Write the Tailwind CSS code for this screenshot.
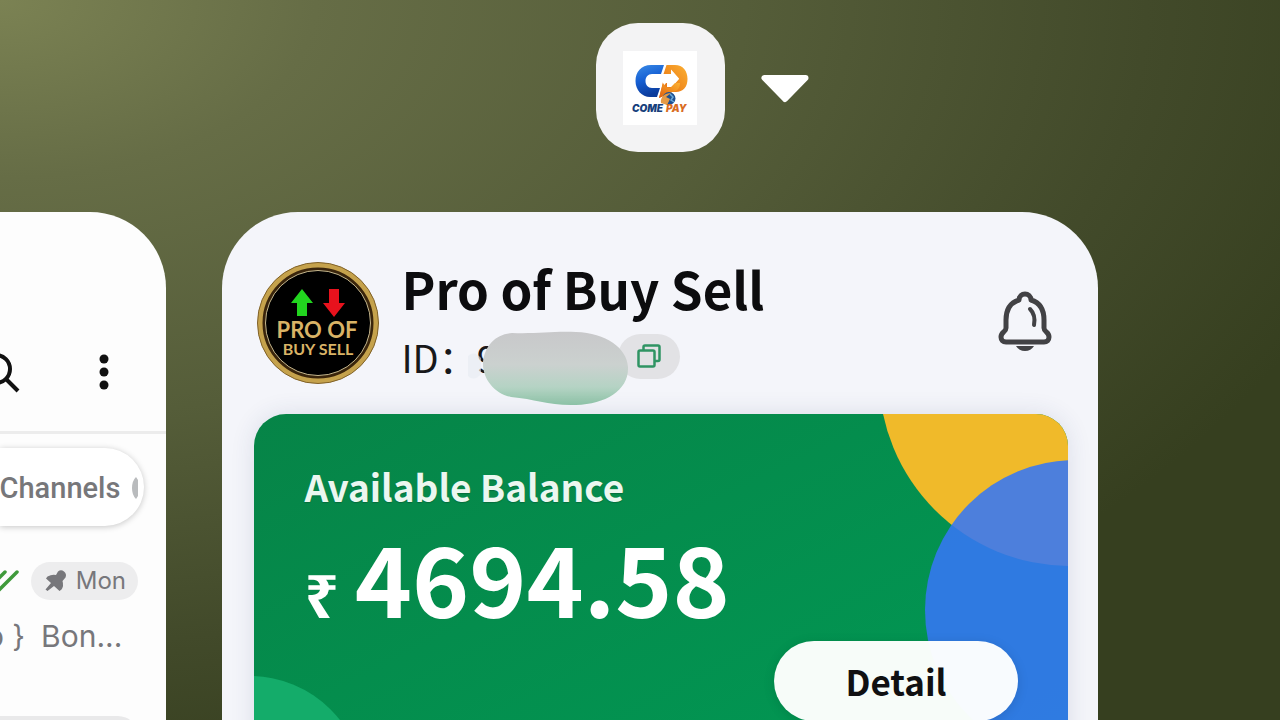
<!DOCTYPE html>
<html lang="en">
<head>
<meta charset="utf-8">
<meta name="viewport" content="width=device-width, initial-scale=1">
<title>Recent apps</title>
<script src="https://cdn.jsdelivr.net/npm/@tailwindcss/browser@4"></script>
</head>
<body class="h-screen overflow-hidden bg-[#363f20] bg-[radial-gradient(ellipse_112%_112%_at_0_0,#7b8253_0%,#666d46_22%,#555d39_52%,#424a2a_80%,#363f1f_100%)] font-['Noto_Sans_CJK_SC','Noto_Sans',sans-serif]">
<div class="flex h-full flex-col">

  <!-- App switcher header -->
  <header class="flex shrink-0 items-center justify-center gap-9 pt-[23px] pl-[124px] pb-[60px]">
    <div class="flex size-[129px] items-center justify-center rounded-[42px] bg-[#f3f3f4]">
      <svg class="size-[74px]" viewBox="0 0 74 74" role="img" aria-label="Come Pay">
        <defs>
          <linearGradient id="blue" x1="0" y1="0" x2="0.3" y2="1"><stop offset="0" stop-color="#3a8be6"/><stop offset="0.5" stop-color="#1660d4"/><stop offset="1" stop-color="#0b3b9c"/></linearGradient>
          <linearGradient id="orange" x1="1" y1="0" x2="0" y2="1"><stop offset="0" stop-color="#fbb033"/><stop offset="0.5" stop-color="#f08a1d"/><stop offset="1" stop-color="#dc5f12"/></linearGradient>
        </defs>
        <rect width="74" height="74" fill="#fff"/>
        <path d="M41 14H28C18 14 12.500 21 12.500 30S19 46 27 46H34L37 37H29C25 37 22.500 34 22.500 30S25 23 29 23H38Z" fill="url(#blue)"/>
        <path d="M43.500 14H52C60 14 64.500 20 64.500 28S60 41 53 41H49L36 47L40 31L44 30V36H49L56 28L48 19V23H40.500Z" fill="url(#orange)"/>
        <path d="M40 23H48V18.500L56 27.500L48 36V32H43L40 36Z" fill="#fff"/>
        <path d="M40 32L36 47L49 41C53 41 57 38 57 32L52 32L47 37L43 36Z" fill="url(#orange)"/>
        <circle cx="46" cy="47.500" r="6.500" fill="#1c4f91"/>
        <path d="M38 52C37 46 42 42 48 42L43 46L47 48L44 54Z" fill="#e49a45"/>
        <path d="M47 43L50 46L48 49L51 51" stroke="#68a8d8" stroke-width="1.500" fill="none"/>
        <text x="9" y="61" font-family="Inter, sans-serif" font-size="10" font-weight="900" font-style="italic" fill="#173f7c">COME</text>
        <text x="43" y="61" font-family="Inter, sans-serif" font-size="10" font-weight="900" font-style="italic" fill="#d96c1f">PAY</text>
      </svg>
    </div>
    <button type="button" aria-label="App options">
      <svg class="h-8 w-12" viewBox="0 0 48 32"><path d="M3.500 6H44.500L24 27Z" fill="#fff" stroke="#fff" stroke-width="6" stroke-linejoin="round"/></svg>
    </button>
  </header>

  <main class="flex min-h-0 flex-1 gap-14 pr-[182px]">

    <!-- Messenger card, partly off-screen -->
    <section class="flex w-[13vw] shrink-0 flex-col overflow-hidden rounded-tr-[76px] bg-[#fdfdfd] font-[Inter,sans-serif]">
      <div class="flex h-[222px] shrink-0 items-end justify-between border-b-3 border-[#ececec] pr-[50px] pb-[35px]">
        <button type="button" aria-label="Search">
          <svg class="h-12 w-6" viewBox="0 0 24 48" fill="none" stroke="#111" stroke-width="4"><circle cx="-4" cy="21" r="14"/><path d="M6 31L18 43"/></svg>
        </button>
        <button type="button" aria-label="More">
          <svg class="h-12 w-6" viewBox="0 0 24 48" fill="#111"><circle cx="12" cy="11" r="4.500"/><circle cx="12" cy="24" r="4.500"/><circle cx="12" cy="37" r="4.500"/></svg>
        </button>
      </div>
      <div class="mt-3.5 mr-[22px] flex h-[78px] shrink-0 items-center justify-end gap-3 rounded-r-full bg-white pt-0.5 pr-1.5 shadow-[0_1px_6px_rgba(0,0,0,0.22)]">
        <a href="#" class="font-[Roboto,sans-serif] text-[29px] leading-8 font-medium text-[#77777a]">Channels</a>
        <svg class="h-6 w-1.5 shrink-0" viewBox="0 0 6 24" fill="#b9bbbd" aria-hidden="true"><path d="M4 1Q0 5 0 12T4 23L6 20V4Z"/></svg>
      </div>
      <div class="mt-9 mr-7 flex shrink-0 items-center justify-end gap-3">
        <svg class="h-6 w-[19px] shrink-0" viewBox="0 0 19 24" fill="none" stroke="#3f9a3b" stroke-width="3.500" stroke-linecap="round"><path d="M-6 14L5 3M-2 22L17 3"/></svg>
        <div class="flex h-[38px] w-[107px] shrink-0 items-center justify-center gap-2 rounded-full bg-[#ededee] text-[#77777b]">
          <svg class="size-6" viewBox="0 0 24 24" fill="currentColor"><path d="M14 2.500Q17 0 20 2.500Q23 5 21.500 8.500L18.500 12Q20 17 17.500 20.500L15.500 22L10 17L3.500 22L1.500 20.500L7 14L2 9.500L3.500 7.500Q8 5 12 6Z"/></svg>
          <span class="text-2xl">Mon</span>
        </div>
      </div>
      <p class="mt-4 mr-11 flex shrink-0 justify-end gap-4 text-[30px] leading-10 whitespace-nowrap text-[#77777b]"><span>o }</span><span>Bon...</span></p>
      <div class="mt-[60px] mr-7 h-10 shrink-0 rounded-r-full bg-[#e9e9ea]"></div>
    </section>

    <!-- Wallet card -->
    <section class="min-w-0 flex-1 rounded-t-[76px] bg-[#f4f5fa] pt-11 pr-[30px] pl-8">
      <div class="flex items-end gap-5">
        <svg class="ml-[3px] size-[124px] shrink-0 text-[#d9b366]" viewBox="0 0 124 124" role="img" aria-label="Pro of Buy Sell">
          <circle cx="61" cy="63" r="60.500" fill="#c5a24c" stroke="#806128"/>
          <circle cx="61" cy="63" r="54" fill="#000" stroke="#3a250c" stroke-width="3"/>
          <circle cx="61" cy="63" r="52.500" fill="none" stroke="#c8b98e"/>
          <path d="M45 29L56 43H50V56H40V43H34Z" fill="#22d51f"/>
          <path d="M72 29H82V43H88L77 57L66 43H72Z" fill="#e8121d"/>
          <g font-family="Lato, sans-serif" font-weight="700" fill="currentColor" text-anchor="middle"><text x="60" y="78" font-size="22">PRO OF</text><text x="61" y="95" font-size="16">BUY SELL</text></g>
        </svg>
        <div class="flex min-w-0 flex-1 flex-col gap-2">
          <h1 class="text-[51px] leading-16 font-bold whitespace-nowrap text-[#0c0c0e]">Pro of Buy Sell</h1>
          <div class="relative flex h-14 items-center">
            <span class="w-[217px] pt-0.5 text-[38px] leading-14 whitespace-nowrap text-[#18181a]">ID：9</span>
            <button type="button" aria-label="Copy ID" class="flex h-[45px] w-[62px] items-center justify-center rounded-full bg-[#e2e2e5]">
              <svg class="size-6" viewBox="0 0 24 24" fill="none" stroke="#2f9463" stroke-width="2.500"><rect x="1.500" y="6.500" width="16" height="16" rx="1.500"/><path d="M6.500 6V3Q6.500 1.500 8 1.500H21Q22.500 1.500 22.500 3V15.500Q22.500 17 21 17H18"/></svg>
            </button>
            <!-- Smudge that hides the account number -->
            <svg class="absolute top-0 left-16 h-20 w-[166px]" viewBox="0 0 166 80">
              <defs><linearGradient id="smudge" x1="0" y1="0" x2="0" y2="1"><stop offset="0" stop-color="#c8c8ca"/><stop offset="0.450" stop-color="#cbd1cf"/><stop offset="0.750" stop-color="#b5d3c4"/><stop offset="1" stop-color="#8fc5a8"/></linearGradient></defs>
              <path d="M3 28Q9 22 16 30V46Q9 54 3 48Z" fill="#e6ebf1" opacity="0.600"/>
              <path d="M18 34C20 17 31 6 47 5C72 6 87 3 111 4C141 5 162 20 163 39C164 62 141 76 111 77C84 78 71 71 46 69C29 66 17 50 18 34Z" fill="url(#smudge)"/>
            </svg>
          </div>
        </div>
        <button type="button" aria-label="Notifications" class="mr-4 mb-8 shrink-0">
          <svg class="h-[62px] w-[54px]" viewBox="0 0 54 62" fill="none" stroke="#424245" stroke-width="5" stroke-linecap="round" stroke-linejoin="round"><path d="M21 10C21 2 33 2 33 10C43 13 46 21 46 30V38C46 42 51 42 51 47C51 50 49 52 46 52H8C5 52 3 50 3 47C3 42 8 42 8 38V30C8 21 11 13 21 10Z"/><path d="M32 19Q38 25 36 35" stroke-width="4"/><path d="M18 56H36Q33 61 27 61T18 56Z" fill="#424245" stroke="none"/></svg>
        </button>
      </div>

      <div class="relative mt-[30px] overflow-hidden rounded-t-[32px] bg-linear-to-br from-[#068447] to-[#009b56] px-[50px] pt-12 pb-24 shadow-[0_0_24px_rgba(40,60,110,0.12)]">
        <svg class="absolute top-0 right-0 h-[400px] w-[200px]" viewBox="0 0 200 400" aria-hidden="true"><circle cx="202" cy="-39" r="191" fill="#f0ba2a"/><circle cx="207" cy="196" r="150" fill="#3576f5" fill-opacity="0.880"/></svg>
        <div class="absolute top-[262px] -left-[118px] size-[228px] rounded-full bg-[#14ac6a]"></div>
        <div class="relative text-white">
          <h2 class="text-[37px] leading-12 font-bold text-[#ebf7f0] text-shadow-xs">Available Balance</h2>
          <p class="mt-[18px] flex items-baseline gap-4 font-bold"><span class="font-['Noto_Sans',sans-serif] text-[60px] leading-12">₹</span><span class="text-[97px] leading-24">4694.58</span></p>
          <button type="button" class="mt-[17px] ml-auto block h-20 w-[244px] rounded-full bg-white/97 text-[35px] font-bold text-[#101012] shadow-[0_2px_12px_rgba(0,0,0,0.12)]">Detail</button>
        </div>
      </div>
    </section>
  </main>
</div>
</body>
</html>
